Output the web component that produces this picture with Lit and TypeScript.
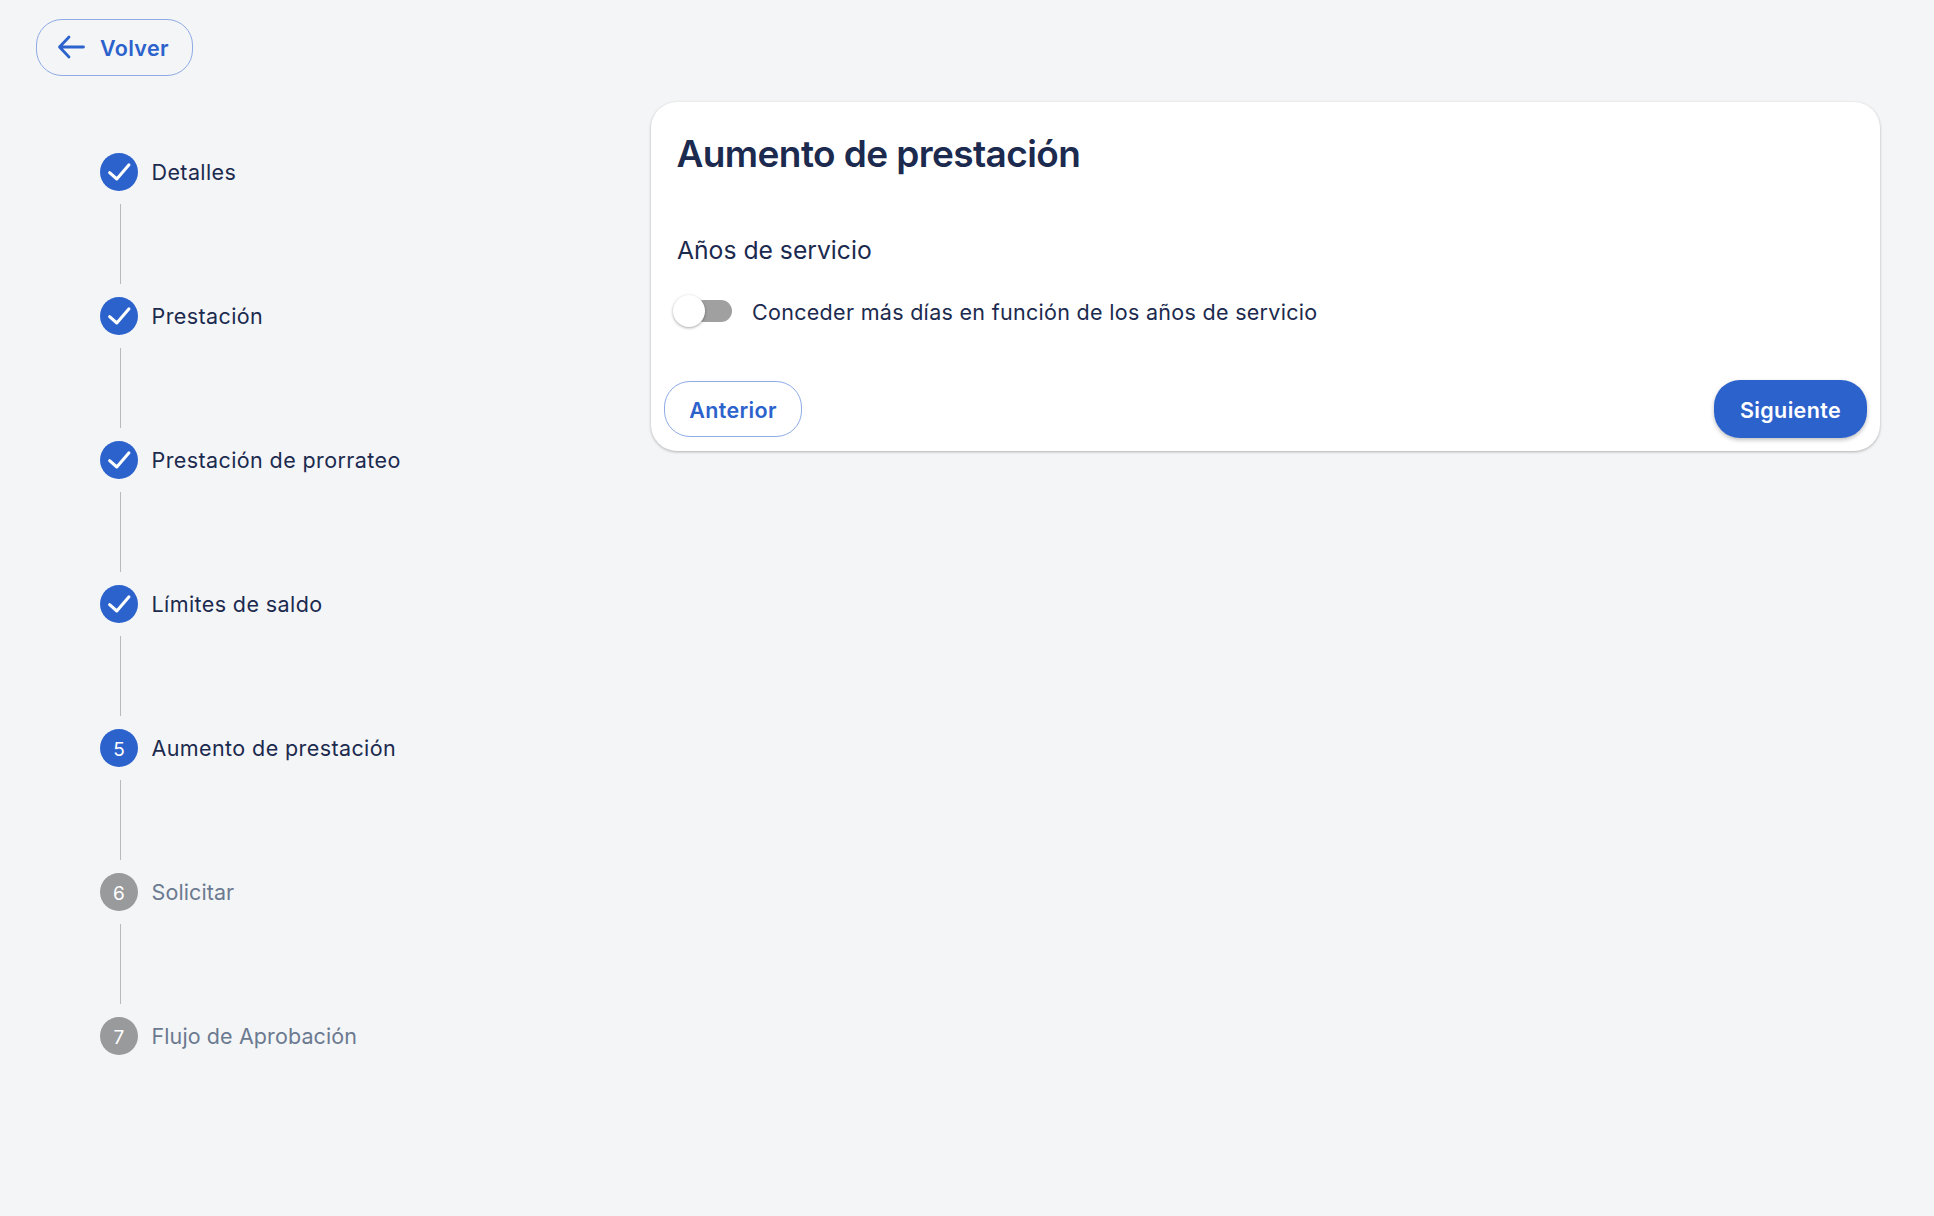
import { LitElement, html, css, svg } from "lit";
import { customElement } from "lit/decorators.js";

const steps = [
  { label: "Detalles", state: "done" },
  { label: "Prestación", state: "done" },
  { label: "Prestación de prorrateo", state: "done" },
  { label: "Límites de saldo", state: "done" },
  { label: "Aumento de prestación", state: "current", n: 5 },
  { label: "Solicitar", state: "todo", n: 6 },
  { label: "Flujo de Aprobación", state: "todo", n: 7 },
];

const check = svg`<path d="M9.600 19.700l7.200 6.300L29 11.800" fill="none" stroke="#fff" stroke-width="3" stroke-linecap="round" stroke-linejoin="round"/>`;

@customElement("app-root")
export class AppRoot extends LitElement {
  static styles = css`
    :host {
      display: block;
      min-height: 1216px;
      background: #f4f5f7;
      font-family: Inter, "Noto Sans", sans-serif;
      color: #1b2a4e;
      overflow: hidden;
    }
    .page { padding: 19px 54px 0 36px; }
    button {
      font-family: inherit;
      font-size: 21.500px;
      font-weight: 600;
      letter-spacing: 0.35px;
      cursor: pointer;
      box-sizing: border-box;
      padding: 2px 0 0;
    }
    .outline {
      display: flex;
      align-items: center;
      height: 57px;
      background: transparent;
      color: #2c62cc;
      border: 1px solid #8fabe6;
      border-radius: 26px;
    }
    .back { width: 157px; padding: 1px 0 0 20px; gap: 15px; }
    .back svg { display: block; margin-top: -2px; }
    .main { display: flex; margin-top: 26px; }
    .sidebar { width: 615px; flex: none; padding: 51px 0 0 64px; box-sizing: border-box; }
    .step { display: flex; align-items: center; gap: 13.500px; height: 38px; font-size: 21.500px; letter-spacing: 0.4px; }
    .step.todo { color: #6b7a90; letter-spacing: 0.1px; }
    .dot {
      width: 38px; height: 38px; border-radius: 50%;
      background: #2c62cc; color: #fff;
      display: flex; align-items: center; justify-content: center;
      font-size: 19px; letter-spacing: 0; flex: none;
    }
    .num { padding-top: 2px; }
    .step.todo .dot { background: #999a9c; }
    .line { width: 1px; height: 80px; margin: 13px 0 13px 19.5px; background: #b9b9b9; }
    .card {
      flex: 1;
      height: 349px;
      box-sizing: border-box;
      background: #fff;
      border-radius: 26px;
      box-shadow: 0 1px 3px rgba(0, 0, 0, 0.28);
      padding: 0 13px 13px;
      display: flex;
      flex-direction: column;
    }
    h1 { margin: 0; padding: 27px 0 0 12.500px; font-size: 37px; line-height: 50px; font-weight: 600; letter-spacing: -0.6px; }
    h2 { margin: 0; padding: 51px 0 0 13px; font-size: 24.700px; line-height: 40px; font-weight: 400; }
    .toggle-row { display: flex; align-items: center; margin-top: 21px; padding-left: 9px; gap: 20px; font-size: 21.500px; letter-spacing: 0.3px; height: 40px; }
    .toggle-row span { padding-top: 1px; }
    .toggle { position: relative; width: 59px; height: 22px; flex: none; display: flex; justify-content: flex-end; }
    .track { width: 39px; height: 22px; border-radius: 11px; background: #a0a0a0; }
    .thumb {
      position: absolute; left: 0; top: -5px; width: 32px; height: 32px; border-radius: 50%;
      background: #fff; box-shadow: 0 1px 3px rgba(0, 0, 0, 0.35);
    }
    .actions { margin-top: auto; display: flex; justify-content: space-between; align-items: center; }
    .prev { background: #fff; width: 138px; height: 56px; justify-content: center; }
    .next {
      width: 153px; height: 58px; border: 0; border-radius: 26px;
      background: #2c62cc; color: #fff;
      box-shadow: 0 2px 4px rgba(0, 0, 0, 0.25);
    }
  `;

  render() {
    return html`
      <div class="page">
        <button class="outline back">
          <svg width="28" height="24" viewBox="0 0 28 24"><path d="M26.500 12H3M12 2 2.500 12 12 22" fill="none" stroke="#2c62cc" stroke-width="2.800" stroke-linecap="round" stroke-linejoin="round"/></svg>
          Volver
        </button>
        <div class="main">
          <nav class="sidebar">
            ${steps.map((s, i) => html`
              <div class="step ${s.state}">
                <div class="dot">${s.state === "done" ? html`<svg width="38" height="38" viewBox="0 0 38 38">${check}</svg>` : html`<span class="num">${s.n}</span>`}</div>
                <span>${s.label}</span>
              </div>
              ${i < steps.length - 1 ? html`<div class="line"></div>` : ""}
            `)}
          </nav>
          <section class="card">
            <h1>Aumento de prestación</h1>
            <h2>Años de servicio</h2>
            <div class="toggle-row">
              <div class="toggle"><div class="track"></div><div class="thumb"></div></div>
              <span>Conceder más días en función de los años de servicio</span>
            </div>
            <div class="actions">
              <button class="outline prev">Anterior</button>
              <button class="next">Siguiente</button>
            </div>
          </section>
        </div>
      </div>
    `;
  }
}
